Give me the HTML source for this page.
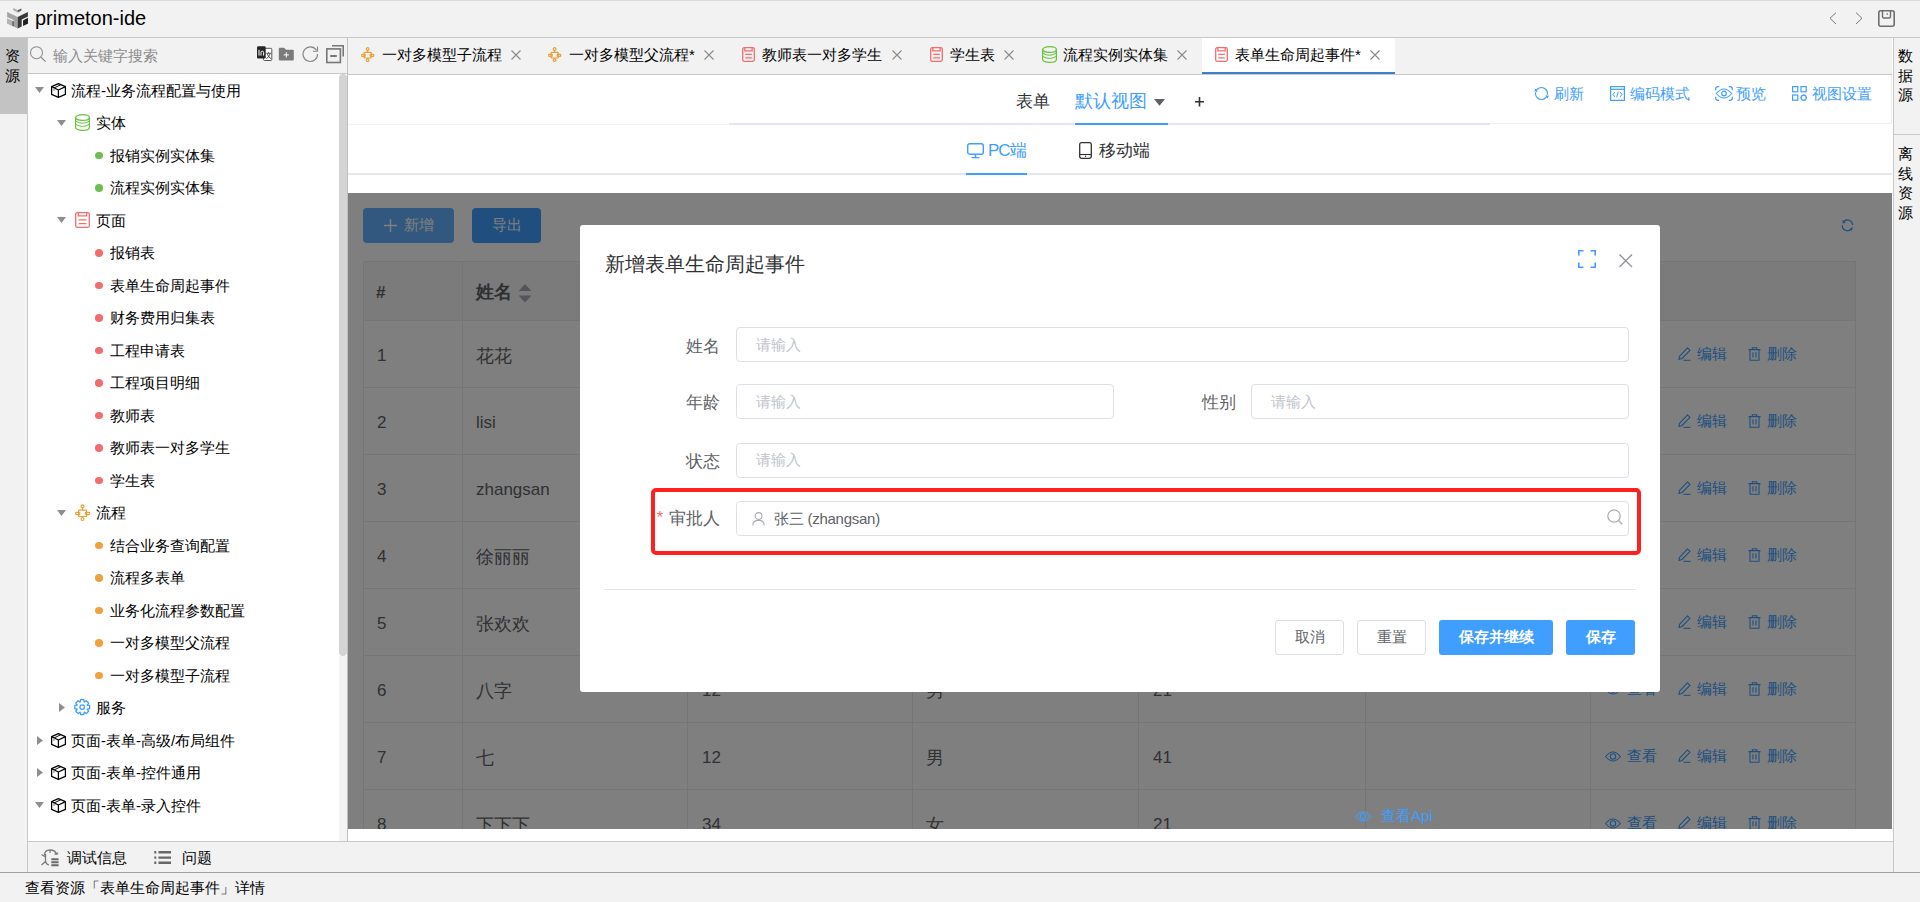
<!DOCTYPE html>
<html><head><meta charset="utf-8">
<style>
*{box-sizing:border-box;margin:0;padding:0}
html,body{width:1920px;height:902px;overflow:hidden;background:#f2f2f2;font-family:"Liberation Sans",sans-serif;color:#000}
.a{position:absolute}
.t{position:absolute;white-space:nowrap;font-size:15px;line-height:20px}
svg{position:absolute;overflow:visible}
</style></head><body>

<div class="a" style="left:0px;top:0px;width:1920px;height:1px;background:#dcdcdc;"></div>
<div class="a" style="left:0px;top:37px;width:1920px;height:1px;background:#c8c8c8;"></div>
<svg style="left:4px;top:4px;" width="28" height="28" viewBox="0 0 28 28"><path d="M3.1 8.1 L13.7 3 L23.9 8.1 L13.7 13 Z" fill="#efefef"/><path d="M3.1 8.1 L13.7 13 L13.7 24.5 L3.1 19.6 Z" fill="#a3a3a3"/><path d="M13.7 13 L23.9 8.1 L23.9 19.6 L13.7 24.5 Z" fill="#383838"/><path d="M3.1 13 L9.5 16.1 L9.5 17.6 L3.1 14.5 Z" fill="#f2f2f2"/><path d="M3.1 14.5 L8.5 17.1 L8.5 21.8 L3.1 19.2 Z" fill="#b3b3b3"/><path d="M8.5 17.1 L9.6 17.6 L9.6 22.3 L8.5 21.8 Z" fill="#4a4a4a"/><path d="M17.7 15.6 L23.9 12.6 L23.9 14.1 L19.2 16.4 L19.2 23 L17.7 23.7 Z" fill="#f2f2f2"/><path d="M19.2 16.4 L23.9 14.1 L23.9 19.5 L19.2 21.7 Z" fill="#1f1f1f"/><path d="M9.3 4 L13.7 6.2 L13.7 8.4 L9.3 6.2 Z" fill="#a8a8a8"/><path d="M13.7 6.2 L17.4 4.5 L17.4 6.6 L13.7 8.4 Z" fill="#585858"/></svg>
<div class="t" style="left:35px;top:4px;font-size:20px;line-height:28px;color:#000;">primeton-ide</div>
<svg style="left:1829px;top:12px;" width="8" height="13" viewBox="0 0 8 13"><path d="M7 0.6 L1 6.3 L7 12" fill="none" stroke="#6a6a6a" stroke-width="0.9"/></svg>
<svg style="left:1855px;top:12px;" width="8" height="13" viewBox="0 0 8 13"><path d="M1 0.6 L7 6.3 L1 12" fill="none" stroke="#6a6a6a" stroke-width="0.9"/></svg>
<svg style="left:1878px;top:10px;" width="17" height="17" viewBox="0 0 17 17"><rect x="0.8" y="0.8" width="15.4" height="15.4" rx="2" fill="none" stroke="#6e6e6e" stroke-width="1.6"/><path d="M4.5 0.8 V6.5 Q4.5 8 6 8 H11 Q12.5 8 12.5 6.5 V0.8" fill="none" stroke="#6e6e6e" stroke-width="1.4"/><path d="M9.2 3 V5" stroke="#6e6e6e" stroke-width="1"/></svg>
<div class="a" style="left:0px;top:38px;width:27px;height:76px;background:#c3c3c3;"></div>
<div class="a" style="left:27px;top:38px;width:1px;height:834px;background:#c8c8c8;"></div>
<div class="t" style="left:5px;top:46px;font-size:15px;line-height:20px;color:#000;">资</div>
<div class="t" style="left:5px;top:66px;font-size:15px;line-height:20px;color:#000;">源</div>
<div class="a" style="left:28px;top:38px;width:319px;height:35px;background:#f2f2f2;"></div>
<div class="a" style="left:28px;top:73px;width:319px;height:1px;background:#c8c8c8;"></div>
<div class="a" style="left:28px;top:74px;width:319px;height:767px;background:#fff;"></div>
<div class="a" style="left:339px;top:656px;width:8px;height:185px;background:#f4f4f4;"></div>
<div class="a" style="left:339px;top:74px;width:8px;height:582px;background:#d4d4d4;border-radius:4px"></div>
<div class="a" style="left:347px;top:38px;width:1px;height:803px;background:#c0c0c0;"></div>
<svg style="left:30px;top:46px;" width="17" height="17" viewBox="0 0 17 17"><circle cx="6.5" cy="6.7" r="6" fill="none" stroke="#8f8f8f" stroke-width="1.1"/><path d="M11 11.2 L15.6 15.6" stroke="#8f8f8f" stroke-width="1.2"/></svg>
<div class="t" style="left:53px;top:46px;font-size:15px;line-height:20px;color:#8c8c8c;">输入关键字搜索</div>
<svg style="left:257px;top:46px;" width="16" height="15" viewBox="0 0 16 15"><rect x="6.5" y="2.3" width="8.3" height="12.2" rx="1" fill="#fff" stroke="#555" stroke-width="1"/><path d="M9.3 7.3 H14 M11.6 6.2 V7.3 M10.2 7.6 Q11.5 11.6 14 12.6 M13.2 7.6 Q11.8 11.6 9.4 12.6" fill="none" stroke="#444" stroke-width="0.9"/><rect x="0" y="0.3" width="8.7" height="12.2" rx="1.3" fill="#262626"/><path d="M2 3.8 V9.6 M4 9.6 V6.4 Q4 5.1 5.3 5.1 Q6.6 5.1 6.6 6.4 V9.6" fill="none" stroke="#fff" stroke-width="1"/></svg>
<svg style="left:278px;top:47px;" width="17" height="14" viewBox="0 0 17 14"><path d="M0.8 1.5 Q0.8 0.7 1.6 0.7 H6.2 L8 2.8 H15 Q15.8 2.8 15.8 3.6 V12.6 Q15.8 13.4 15 13.4 H1.6 Q0.8 13.4 0.8 12.6 Z" fill="#7b7b7b"/><path d="M8.3 5.3 V10.5 M5.7 7.9 H10.9" stroke="#fff" stroke-width="1"/></svg>
<svg style="left:302px;top:45px;" width="17" height="17" viewBox="0 0 17 17"><path d="M14.5 5.3 A7.3 7.3 0 1 0 15.6 9" fill="none" stroke="#858585" stroke-width="1.1"/><path d="M15.5 1.6 V6.2 H11" fill="none" stroke="#858585" stroke-width="1.1"/></svg>
<svg style="left:325px;top:45px;" width="20" height="19" viewBox="0 0 20 19"><path d="M7 0.8 H18.2 V11.5" fill="none" stroke="#777" stroke-width="1.6"/><rect x="1.8" y="3.9" width="13.6" height="13.6" fill="none" stroke="#777" stroke-width="1.6"/><path d="M5.2 11 H11.8" stroke="#777" stroke-width="2"/></svg>
<svg style="left:35px;top:87.0px;" width="9" height="6" viewBox="0 0 9 6"><path d="M0 0 H9 L4.5 6 Z" fill="#8e8e8e"/></svg>
<svg style="left:51px;top:82.7px;" width="15" height="15" viewBox="0 0 15 15"><g fill="none" stroke="#000" stroke-width="1.25" stroke-linejoin="round"><path d="M7.4 0.6 L14.4 3.6 L14.4 11.4 L7.4 14.4 L0.6 11.4 L0.6 3.6 Z"/><path d="M0.6 3.6 L7.4 7 L14.4 3.6 M7.4 7 L7.4 14.4"/><path d="M3 5 L10 1.6" stroke-width="1"/></g><path d="M3 5.2 V8" stroke="#888" stroke-width="1.2"/></svg>
<div class="t" style="left:71px;top:80.5px;font-size:15px;line-height:20px;color:#000;">流程-业务流程配置与使用</div>
<svg style="left:57px;top:119.5px;" width="9" height="6" viewBox="0 0 9 6"><path d="M0 0 H9 L4.5 6 Z" fill="#8e8e8e"/></svg>
<svg style="left:75px;top:113.5px;" width="15" height="17" viewBox="0 0 15 17"><g fill="none" stroke="#67c23a" stroke-width="1.2"><ellipse cx="7.5" cy="3.5" rx="6.9" ry="2.9"/><path d="M0.6 3.5 V13.5 A6.9 2.9 0 0 0 14.4 13.5 V3.5"/><path d="M0.6 7 Q7.5 11.5 14.4 7" stroke-width="1"/><path d="M0.6 10.3 Q7.5 14.6 14.4 10.3" stroke-width="1"/></g></svg>
<div class="t" style="left:96px;top:113.0px;font-size:15px;line-height:20px;color:#000;">实体</div>
<div class="a" style="left:95px;top:151.8px;width:8px;height:7.5px;border-radius:50%;background:#6cbf4b"></div>
<div class="t" style="left:110px;top:145.5px;font-size:15px;line-height:20px;color:#000;">报销实例实体集</div>
<div class="a" style="left:95px;top:184.3px;width:8px;height:7.5px;border-radius:50%;background:#6cbf4b"></div>
<div class="t" style="left:110px;top:178.0px;font-size:15px;line-height:20px;color:#000;">流程实例实体集</div>
<svg style="left:57px;top:217.0px;" width="9" height="6" viewBox="0 0 9 6"><path d="M0 0 H9 L4.5 6 Z" fill="#8e8e8e"/></svg>
<svg style="left:75px;top:211.5px;" width="15" height="16" viewBox="0 0 15 16"><g fill="none" stroke="#f56c6c" stroke-width="1.3"><rect x="0.7" y="0.7" width="13.6" height="14.6" rx="1.5"/><path d="M3.3 0.7 V3.8 H11.700000000000001 V0.7"/><path d="M3.75 7.84 H11.4 M3.75 11.68 H11.4"/></g></svg>
<div class="t" style="left:96px;top:210.5px;font-size:15px;line-height:20px;color:#000;">页面</div>
<div class="a" style="left:95px;top:249.3px;width:8px;height:7.5px;border-radius:50%;background:#f26d6d"></div>
<div class="t" style="left:110px;top:243.0px;font-size:15px;line-height:20px;color:#000;">报销表</div>
<div class="a" style="left:95px;top:281.8px;width:8px;height:7.5px;border-radius:50%;background:#f26d6d"></div>
<div class="t" style="left:110px;top:275.5px;font-size:15px;line-height:20px;color:#000;">表单生命周起事件</div>
<div class="a" style="left:95px;top:314.3px;width:8px;height:7.5px;border-radius:50%;background:#f26d6d"></div>
<div class="t" style="left:110px;top:308.0px;font-size:15px;line-height:20px;color:#000;">财务费用归集表</div>
<div class="a" style="left:95px;top:346.8px;width:8px;height:7.5px;border-radius:50%;background:#f26d6d"></div>
<div class="t" style="left:110px;top:340.5px;font-size:15px;line-height:20px;color:#000;">工程申请表</div>
<div class="a" style="left:95px;top:379.3px;width:8px;height:7.5px;border-radius:50%;background:#f26d6d"></div>
<div class="t" style="left:110px;top:373.0px;font-size:15px;line-height:20px;color:#000;">工程项目明细</div>
<div class="a" style="left:95px;top:411.8px;width:8px;height:7.5px;border-radius:50%;background:#f26d6d"></div>
<div class="t" style="left:110px;top:405.5px;font-size:15px;line-height:20px;color:#000;">教师表</div>
<div class="a" style="left:95px;top:444.3px;width:8px;height:7.5px;border-radius:50%;background:#f26d6d"></div>
<div class="t" style="left:110px;top:438.0px;font-size:15px;line-height:20px;color:#000;">教师表一对多学生</div>
<div class="a" style="left:95px;top:476.8px;width:8px;height:7.5px;border-radius:50%;background:#f26d6d"></div>
<div class="t" style="left:110px;top:470.5px;font-size:15px;line-height:20px;color:#000;">学生表</div>
<svg style="left:57px;top:509.5px;" width="9" height="6" viewBox="0 0 9 6"><path d="M0 0 H9 L4.5 6 Z" fill="#8e8e8e"/></svg>
<svg style="left:74.5px;top:503.5px;" width="16" height="17" viewBox="0 0 16 17"><g transform="scale(1.0)" fill="none" stroke="#e6a23c" stroke-width="1.20"><circle cx="7.5" cy="2.3" r="1.5"/><circle cx="7.5" cy="15" r="1.5"/><path d="M7.5 3.8 V6.2 M7.5 12.5 V13.5"/><rect x="3.6" y="6.2" width="8" height="6.3" rx="0.6"/><rect x="0.8" y="8.3" width="4" height="2.3" rx="0.5"/><rect x="10.4" y="8.3" width="4" height="2.3" rx="0.5"/></g></svg>
<div class="t" style="left:96px;top:503.0px;font-size:15px;line-height:20px;color:#000;">流程</div>
<div class="a" style="left:95px;top:541.8px;width:8px;height:7.5px;border-radius:50%;background:#f0a03c"></div>
<div class="t" style="left:110px;top:535.5px;font-size:15px;line-height:20px;color:#000;">结合业务查询配置</div>
<div class="a" style="left:95px;top:574.3px;width:8px;height:7.5px;border-radius:50%;background:#f0a03c"></div>
<div class="t" style="left:110px;top:568.0px;font-size:15px;line-height:20px;color:#000;">流程多表单</div>
<div class="a" style="left:95px;top:606.8px;width:8px;height:7.5px;border-radius:50%;background:#f0a03c"></div>
<div class="t" style="left:110px;top:600.5px;font-size:15px;line-height:20px;color:#000;">业务化流程参数配置</div>
<div class="a" style="left:95px;top:639.3px;width:8px;height:7.5px;border-radius:50%;background:#f0a03c"></div>
<div class="t" style="left:110px;top:633.0px;font-size:15px;line-height:20px;color:#000;">一对多模型父流程</div>
<div class="a" style="left:95px;top:671.8px;width:8px;height:7.5px;border-radius:50%;background:#f0a03c"></div>
<div class="t" style="left:110px;top:665.5px;font-size:15px;line-height:20px;color:#000;">一对多模型子流程</div>
<svg style="left:59px;top:703.0px;" width="6" height="9" viewBox="0 0 6 9"><path d="M0 0 V9 L6 4.5 Z" fill="#8e8e8e"/></svg>
<svg style="left:74px;top:699.2px;" width="17" height="17" viewBox="0 0 17 17"><g fill="none" stroke="#409eff" stroke-width="1.3" stroke-linejoin="round"><path d="M6.54 0.68 L9.86 0.68 L10.25 3.11 L10.28 3.12 L12.27 1.68 L14.62 4.03 L13.18 6.02 L13.19 6.05 L15.62 6.44 L15.62 9.76 L13.19 10.15 L13.18 10.18 L14.62 12.17 L12.27 14.52 L10.28 13.08 L10.25 13.09 L9.86 15.52 L6.54 15.52 L6.15 13.09 L6.12 13.08 L4.13 14.52 L1.78 12.17 L3.22 10.18 L3.21 10.15 L0.78 9.76 L0.78 6.44 L3.21 6.05 L3.22 6.02 L1.78 4.03 L4.13 1.68 L6.12 3.12 L6.15 3.11 Z"/><circle cx="8.2" cy="8.1" r="2.3"/></g></svg>
<div class="t" style="left:96px;top:698.0px;font-size:15px;line-height:20px;color:#000;">服务</div>
<svg style="left:37px;top:735.5px;" width="6" height="9" viewBox="0 0 6 9"><path d="M0 0 V9 L6 4.5 Z" fill="#8e8e8e"/></svg>
<svg style="left:51px;top:732.7px;" width="15" height="15" viewBox="0 0 15 15"><g fill="none" stroke="#000" stroke-width="1.25" stroke-linejoin="round"><path d="M7.4 0.6 L14.4 3.6 L14.4 11.4 L7.4 14.4 L0.6 11.4 L0.6 3.6 Z"/><path d="M0.6 3.6 L7.4 7 L14.4 3.6 M7.4 7 L7.4 14.4"/><path d="M3 5 L10 1.6" stroke-width="1"/></g><path d="M3 5.2 V8" stroke="#888" stroke-width="1.2"/></svg>
<div class="t" style="left:71px;top:730.5px;font-size:15px;line-height:20px;color:#000;">页面-表单-高级/布局组件</div>
<svg style="left:37px;top:768.0px;" width="6" height="9" viewBox="0 0 6 9"><path d="M0 0 V9 L6 4.5 Z" fill="#8e8e8e"/></svg>
<svg style="left:51px;top:765.2px;" width="15" height="15" viewBox="0 0 15 15"><g fill="none" stroke="#000" stroke-width="1.25" stroke-linejoin="round"><path d="M7.4 0.6 L14.4 3.6 L14.4 11.4 L7.4 14.4 L0.6 11.4 L0.6 3.6 Z"/><path d="M0.6 3.6 L7.4 7 L14.4 3.6 M7.4 7 L7.4 14.4"/><path d="M3 5 L10 1.6" stroke-width="1"/></g><path d="M3 5.2 V8" stroke="#888" stroke-width="1.2"/></svg>
<div class="t" style="left:71px;top:763.0px;font-size:15px;line-height:20px;color:#000;">页面-表单-控件通用</div>
<svg style="left:35px;top:802.0px;" width="9" height="6" viewBox="0 0 9 6"><path d="M0 0 H9 L4.5 6 Z" fill="#8e8e8e"/></svg>
<svg style="left:51px;top:797.7px;" width="15" height="15" viewBox="0 0 15 15"><g fill="none" stroke="#000" stroke-width="1.25" stroke-linejoin="round"><path d="M7.4 0.6 L14.4 3.6 L14.4 11.4 L7.4 14.4 L0.6 11.4 L0.6 3.6 Z"/><path d="M0.6 3.6 L7.4 7 L14.4 3.6 M7.4 7 L7.4 14.4"/><path d="M3 5 L10 1.6" stroke-width="1"/></g><path d="M3 5.2 V8" stroke="#888" stroke-width="1.2"/></svg>
<div class="t" style="left:71px;top:795.5px;font-size:15px;line-height:20px;color:#000;">页面-表单-录入控件</div>
<div class="a" style="left:28px;top:841px;width:1865px;height:1px;background:#c8c8c8;"></div>
<div class="a" style="left:0px;top:872px;width:1920px;height:1px;background:#a0a0a0;"></div>
<div class="a" style="left:1893px;top:38px;width:1px;height:834px;background:#c8c8c8;"></div>
<div class="a" style="left:1894px;top:134px;width:26px;height:1px;background:#c8c8c8;"></div>
<div class="a" style="left:348px;top:38px;width:1545px;height:36px;background:#f2f2f2;"></div>
<div class="a" style="left:348px;top:74px;width:1545px;height:1px;background:#c8c8c8;"></div>
<div class="a" style="left:1202px;top:38px;width:193px;height:34px;background:#fff;"></div>
<div class="a" style="left:1202px;top:72px;width:193px;height:2px;background:#3d7fcf;"></div>
<svg style="left:360.5px;top:46.5px;" width="16" height="17" viewBox="0 0 16 17"><g transform="scale(0.88)" fill="none" stroke="#e6a23c" stroke-width="1.36"><circle cx="7.5" cy="2.3" r="1.5"/><circle cx="7.5" cy="15" r="1.5"/><path d="M7.5 3.8 V6.2 M7.5 12.5 V13.5"/><rect x="3.6" y="6.2" width="8" height="6.3" rx="0.6"/><rect x="0.8" y="8.3" width="4" height="2.3" rx="0.5"/><rect x="10.4" y="8.3" width="4" height="2.3" rx="0.5"/></g></svg>
<div class="t" style="left:382px;top:45px;font-size:15px;line-height:20px;color:#000;">一对多模型子流程</div>
<svg style="left:511px;top:49.5px;" width="10" height="10" viewBox="0 0 10 10"><path d="M0.5 0.5 L9.5 9.5 M9.5 0.5 L0.5 9.5" stroke="#8a8a8a" stroke-width="1.1" fill="none"/></svg>
<svg style="left:547.5px;top:46.5px;" width="16" height="17" viewBox="0 0 16 17"><g transform="scale(0.88)" fill="none" stroke="#e6a23c" stroke-width="1.36"><circle cx="7.5" cy="2.3" r="1.5"/><circle cx="7.5" cy="15" r="1.5"/><path d="M7.5 3.8 V6.2 M7.5 12.5 V13.5"/><rect x="3.6" y="6.2" width="8" height="6.3" rx="0.6"/><rect x="0.8" y="8.3" width="4" height="2.3" rx="0.5"/><rect x="10.4" y="8.3" width="4" height="2.3" rx="0.5"/></g></svg>
<div class="t" style="left:569px;top:45px;font-size:15px;line-height:20px;color:#000;">一对多模型父流程*</div>
<svg style="left:704px;top:49.5px;" width="10" height="10" viewBox="0 0 10 10"><path d="M0.5 0.5 L9.5 9.5 M9.5 0.5 L0.5 9.5" stroke="#8a8a8a" stroke-width="1.1" fill="none"/></svg>
<svg style="left:742px;top:47px;" width="13" height="15" viewBox="0 0 13 15"><g fill="none" stroke="#f56c6c" stroke-width="1.3"><rect x="0.7" y="0.7" width="11.6" height="13.6" rx="1.5"/><path d="M2.86 0.7 V3.8 H10.14 V0.7"/><path d="M3.25 7.35 H9.88 M3.25 10.95 H9.88"/></g></svg>
<div class="t" style="left:762px;top:45px;font-size:15px;line-height:20px;color:#000;">教师表一对多学生</div>
<svg style="left:892px;top:49.5px;" width="10" height="10" viewBox="0 0 10 10"><path d="M0.5 0.5 L9.5 9.5 M9.5 0.5 L0.5 9.5" stroke="#8a8a8a" stroke-width="1.1" fill="none"/></svg>
<svg style="left:930px;top:47px;" width="13" height="15" viewBox="0 0 13 15"><g fill="none" stroke="#f56c6c" stroke-width="1.3"><rect x="0.7" y="0.7" width="11.6" height="13.6" rx="1.5"/><path d="M2.86 0.7 V3.8 H10.14 V0.7"/><path d="M3.25 7.35 H9.88 M3.25 10.95 H9.88"/></g></svg>
<div class="t" style="left:950px;top:45px;font-size:15px;line-height:20px;color:#000;">学生表</div>
<svg style="left:1004px;top:49.5px;" width="10" height="10" viewBox="0 0 10 10"><path d="M0.5 0.5 L9.5 9.5 M9.5 0.5 L0.5 9.5" stroke="#8a8a8a" stroke-width="1.1" fill="none"/></svg>
<svg style="left:1042px;top:46px;" width="15" height="17" viewBox="0 0 15 17"><g fill="none" stroke="#67c23a" stroke-width="1.2"><ellipse cx="7.5" cy="3.5" rx="6.9" ry="2.9"/><path d="M0.6 3.5 V13.5 A6.9 2.9 0 0 0 14.4 13.5 V3.5"/><path d="M0.6 7 Q7.5 11.5 14.4 7" stroke-width="1"/><path d="M0.6 10.3 Q7.5 14.6 14.4 10.3" stroke-width="1"/></g></svg>
<div class="t" style="left:1063px;top:45px;font-size:15px;line-height:20px;color:#000;">流程实例实体集</div>
<svg style="left:1177px;top:49.5px;" width="10" height="10" viewBox="0 0 10 10"><path d="M0.5 0.5 L9.5 9.5 M9.5 0.5 L0.5 9.5" stroke="#8a8a8a" stroke-width="1.1" fill="none"/></svg>
<svg style="left:1215px;top:47px;" width="13" height="15" viewBox="0 0 13 15"><g fill="none" stroke="#f56c6c" stroke-width="1.3"><rect x="0.7" y="0.7" width="11.6" height="13.6" rx="1.5"/><path d="M2.86 0.7 V3.8 H10.14 V0.7"/><path d="M3.25 7.35 H9.88 M3.25 10.95 H9.88"/></g></svg>
<div class="t" style="left:1235px;top:45px;font-size:15px;line-height:20px;color:#000;">表单生命周起事件*</div>
<svg style="left:1370px;top:49.5px;" width="10" height="10" viewBox="0 0 10 10"><path d="M0.5 0.5 L9.5 9.5 M9.5 0.5 L0.5 9.5" stroke="#8a8a8a" stroke-width="1.1" fill="none"/></svg>
<div class="a" style="left:348px;top:75px;width:1544px;height:118px;background:#fff;"></div>
<div class="a" style="left:729px;top:123px;width:761px;height:2px;background:#e4e7ed;"></div>
<div class="a" style="left:1490px;top:123px;width:402px;height:1px;background:#f3eef0;"></div>
<div class="a" style="left:1891px;top:75px;width:1px;height:49px;background:#f1eced;"></div>
<div class="a" style="left:348px;top:124px;width:381px;height:1px;background:#f3f3f3;"></div>
<div class="t" style="left:1016px;top:89.5px;font-size:17px;line-height:24px;color:#303133;">表单</div>
<div class="t" style="left:1075px;top:89px;font-size:17.5px;line-height:24px;color:#409eff;">默认视图</div>
<svg style="left:1154px;top:99px;" width="11" height="7" viewBox="0 0 11 7"><path d="M0 0 H11 L5.5 6.8 Z" fill="#5f6167"/></svg>
<svg style="left:1194.5px;top:97px;" width="9" height="9.5" viewBox="0 0 9 9.5"><path d="M4.5 0 V9.5 M0 4.75 H9" stroke="#303133" stroke-width="1.6"/></svg>
<div class="a" style="left:1075px;top:123px;width:93px;height:2px;background:#409eff;"></div>
<svg style="left:1534px;top:86px;" width="15" height="15" viewBox="0 0 15 15"><circle cx="7.5" cy="7.5" r="6" fill="none" stroke="#409eff" stroke-width="1.1"/><path d="M0 5.6 L3.6 5.6 L1.6 2.6 Z M15 9.4 L11.4 9.4 L13.4 12.4 Z" fill="#409eff"/><path d="M0.8 5.2 L2.6 6.6 M14.2 9.8 L12.4 8.4" stroke="#fff" stroke-width="0.8"/></svg>
<div class="t" style="left:1554px;top:84px;font-size:15px;line-height:20px;color:#409eff;">刷新</div>
<svg style="left:1610px;top:86px;" width="15" height="15" viewBox="0 0 15 15"><rect x="0.6" y="0.6" width="13.8" height="13.8" fill="none" stroke="#409eff" stroke-width="1.2"/><path d="M0.6 3.3 H14.4" stroke="#409eff" stroke-width="1.2"/><path d="M5 6 L3 8.5 L5 11 M10 6 L12 8.5 L10 11 M8.3 5.6 L6.7 11.4" fill="none" stroke="#409eff" stroke-width="1"/></svg>
<div class="t" style="left:1629.5px;top:84px;font-size:15px;line-height:20px;color:#409eff;">编码模式</div>
<svg style="left:1714.5px;top:86px;" width="18" height="15" viewBox="0 0 18 15"><path d="M0.7 4.2 V3 Q0.7 0.7 3 0.7 H4.2 M13.8 0.7 H15 Q17.3 0.7 17.3 3 V4.2 M17.3 10.8 V12 Q17.3 14.3 15 14.3 H13.8 M4.2 14.3 H3 Q0.7 14.3 0.7 12 V10.8" fill="none" stroke="#409eff" stroke-width="1.2"/><path d="M1.3 7.5 Q9 -1.6 16.7 7.5 Q9 16.6 1.3 7.5 Z" fill="none" stroke="#409eff" stroke-width="1.1"/><circle cx="9" cy="7.5" r="2.3" fill="none" stroke="#409eff" stroke-width="1.2"/></svg>
<div class="t" style="left:1736px;top:84px;font-size:15px;line-height:20px;color:#409eff;">预览</div>
<svg style="left:1792px;top:86px;" width="16" height="15" viewBox="0 0 16 15"><g fill="none" stroke="#409eff" stroke-width="1.2"><rect x="0.6" y="0.6" width="5.2" height="5.2"/><rect x="9" y="0.6" width="5.2" height="5.2"/><rect x="0.6" y="9" width="5.2" height="5.2"/><circle cx="11.7" cy="11.7" r="2.5"/><path d="M11.7 8.4 V9.2 M11.7 14.2 V15 M8.4 11.7 H9.2 M14.2 11.7 H15" /></g></svg>
<div class="t" style="left:1812px;top:84px;font-size:15px;line-height:20px;color:#409eff;">视图设置</div>
<div class="a" style="left:348px;top:173px;width:1544px;height:2px;background:#e4e7ed;"></div>
<div class="a" style="left:966px;top:173px;width:61px;height:2px;background:#409eff;"></div>
<svg style="left:966.5px;top:143px;" width="17" height="16" viewBox="0 0 17 16"><rect x="0.7" y="0.7" width="15.6" height="10.5" rx="2" fill="none" stroke="#409eff" stroke-width="1.4"/><path d="M8.5 11.2 V14.6 M4.5 14.6 H12.5" stroke="#409eff" stroke-width="1.4"/></svg>
<div class="t" style="left:988px;top:139px;font-size:17px;line-height:24px;color:#409eff;"><span style="font-size:17px;letter-spacing:-1px">PC</span>端</div>
<svg style="left:1079px;top:142px;" width="13" height="17" viewBox="0 0 13 17"><rect x="0.7" y="0.7" width="11.6" height="15.6" rx="1.8" fill="none" stroke="#303133" stroke-width="1.3"/><path d="M0.7 12.5 H12.3" stroke="#303133" stroke-width="1.1"/><circle cx="6.5" cy="14.3" r="0.7" fill="#303133"/></svg>
<div class="t" style="left:1099px;top:139px;font-size:17px;line-height:24px;color:#303133;">移动端</div>
<div class="a" style="left:348px;top:193px;width:1544px;height:636px;background:#fff;"></div>
<div class="a" style="left:363px;top:208px;width:91px;height:35px;background:#66b1ff;border-radius:4px"></div>
<svg style="left:384px;top:218.5px;" width="13" height="13" viewBox="0 0 13 13"><path d="M6.5 0 V13 M0 6.5 H13" stroke="#fff" stroke-width="1.4"/></svg>
<div class="t" style="left:404px;top:215px;font-size:15px;line-height:20px;color:#fff;">新增</div>
<div class="a" style="left:472px;top:208px;width:69px;height:35px;background:#409eff;border-radius:4px"></div>
<div class="t" style="left:491.5px;top:215px;font-size:15px;line-height:20px;color:#fff;">导出</div>
<svg style="left:1841px;top:219px;" width="13" height="13" viewBox="0 0 13 13"><path d="M3 2.3 A5.3 5.3 0 0 1 11.7 6" fill="none" stroke="#409eff" stroke-width="1.3"/><path d="M1.3 6.2 A5.3 5.3 0 0 0 10.2 10.3" fill="none" stroke="#409eff" stroke-width="1.3"/><path d="M1.4 1 L1.7 4.6 L5 3.4 Z M11.7 8.1 L11.3 11.7 L8.2 10.4 Z" fill="#409eff"/></svg>
<div class="a" style="left:363px;top:261px;width:1492px;height:59px;background:#f6f7f9;"></div>
<div class="a" style="left:363px;top:261px;width:1492px;height:1px;background:#e9ebef;"></div>
<div class="a" style="left:363px;top:320px;width:1492px;height:1px;background:#e9ebef;"></div>
<div class="a" style="left:363px;top:387px;width:1492px;height:1px;background:#e9ebef;"></div>
<div class="a" style="left:363px;top:454px;width:1492px;height:1px;background:#e9ebef;"></div>
<div class="a" style="left:363px;top:521px;width:1492px;height:1px;background:#e9ebef;"></div>
<div class="a" style="left:363px;top:588px;width:1492px;height:1px;background:#e9ebef;"></div>
<div class="a" style="left:363px;top:655px;width:1492px;height:1px;background:#e9ebef;"></div>
<div class="a" style="left:363px;top:722px;width:1492px;height:1px;background:#e9ebef;"></div>
<div class="a" style="left:363px;top:789px;width:1492px;height:1px;background:#e9ebef;"></div>
<div class="a" style="left:363px;top:261px;width:1px;height:568px;background:#e9ebef;"></div>
<div class="a" style="left:462px;top:261px;width:1px;height:568px;background:#e9ebef;"></div>
<div class="a" style="left:687px;top:261px;width:1px;height:568px;background:#e9ebef;"></div>
<div class="a" style="left:912px;top:261px;width:1px;height:568px;background:#e9ebef;"></div>
<div class="a" style="left:1138px;top:261px;width:1px;height:568px;background:#e9ebef;"></div>
<div class="a" style="left:1365px;top:261px;width:1px;height:568px;background:#e9ebef;"></div>
<div class="a" style="left:1590px;top:261px;width:1px;height:568px;background:#e9ebef;"></div>
<div class="a" style="left:1855px;top:261px;width:1px;height:568px;background:#e9ebef;"></div>
<div class="t" style="left:376px;top:282.5px;font-size:17px;line-height:20px;color:#5c5e62;font-weight:bold">#</div>
<div class="t" style="left:476px;top:280.5px;font-size:18px;line-height:22px;color:#5c5e62;font-weight:bold">姓名</div>
<svg style="left:518px;top:283.5px;" width="14" height="20" viewBox="0 0 14 20"><path d="M7 0 L13.5 7 H0.5 Z M0.5 11.5 H13.5 L7 18.5 Z" fill="#a8abb2"/></svg>
<div class="t" style="left:377px;top:344.5px;font-size:17px;line-height:22px;color:#606266;">1</div>
<div class="t" style="left:476px;top:344.5px;font-size:18px;line-height:22px;color:#606266;">花花</div>
<svg style="left:1605px;top:349.2px;" width="16" height="11" viewBox="0 0 16 11"><path d="M0.6 5.5 Q8 -3.6 15.4 5.5 Q8 14.6 0.6 5.5 Z" fill="none" stroke="#409eff" stroke-width="1.1"/><circle cx="8" cy="5.5" r="2.7" fill="none" stroke="#409eff" stroke-width="1.1"/></svg>
<div class="t" style="left:1627px;top:344.3px;font-size:15px;line-height:20px;color:#409eff;">查看</div>
<svg style="left:1677.5px;top:347.2px;" width="13" height="14" viewBox="0 0 13 14"><path d="M9.5 0.8 L12 3.3 L4 11.5 L1 12.5 L1.5 9.3 Z" fill="none" stroke="#409eff" stroke-width="1.1" stroke-linejoin="round"/><path d="M5.5 13.3 H12.5" stroke="#409eff" stroke-width="1.1"/></svg>
<div class="t" style="left:1697px;top:344.3px;font-size:15px;line-height:20px;color:#409eff;">编辑</div>
<svg style="left:1748px;top:347.2px;" width="13" height="14" viewBox="0 0 13 14"><path d="M0.5 2.6 H12.5 M4.3 2.6 V0.7 H8.7 V2.6" fill="none" stroke="#409eff" stroke-width="1.1"/><path d="M2 2.6 V13.2 H11 V2.6" fill="none" stroke="#409eff" stroke-width="1.1"/><path d="M5 5.3 V10.5 M8 5.3 V10.5" stroke="#409eff" stroke-width="1.1"/></svg>
<div class="t" style="left:1767px;top:344.3px;font-size:15px;line-height:20px;color:#409eff;">删除</div>
<div class="t" style="left:377px;top:411.5px;font-size:17px;line-height:22px;color:#606266;">2</div>
<div class="t" style="left:476px;top:411.5px;font-size:17px;line-height:22px;color:#606266;">lisi</div>
<svg style="left:1605px;top:416.2px;" width="16" height="11" viewBox="0 0 16 11"><path d="M0.6 5.5 Q8 -3.6 15.4 5.5 Q8 14.6 0.6 5.5 Z" fill="none" stroke="#409eff" stroke-width="1.1"/><circle cx="8" cy="5.5" r="2.7" fill="none" stroke="#409eff" stroke-width="1.1"/></svg>
<div class="t" style="left:1627px;top:411.3px;font-size:15px;line-height:20px;color:#409eff;">查看</div>
<svg style="left:1677.5px;top:414.2px;" width="13" height="14" viewBox="0 0 13 14"><path d="M9.5 0.8 L12 3.3 L4 11.5 L1 12.5 L1.5 9.3 Z" fill="none" stroke="#409eff" stroke-width="1.1" stroke-linejoin="round"/><path d="M5.5 13.3 H12.5" stroke="#409eff" stroke-width="1.1"/></svg>
<div class="t" style="left:1697px;top:411.3px;font-size:15px;line-height:20px;color:#409eff;">编辑</div>
<svg style="left:1748px;top:414.2px;" width="13" height="14" viewBox="0 0 13 14"><path d="M0.5 2.6 H12.5 M4.3 2.6 V0.7 H8.7 V2.6" fill="none" stroke="#409eff" stroke-width="1.1"/><path d="M2 2.6 V13.2 H11 V2.6" fill="none" stroke="#409eff" stroke-width="1.1"/><path d="M5 5.3 V10.5 M8 5.3 V10.5" stroke="#409eff" stroke-width="1.1"/></svg>
<div class="t" style="left:1767px;top:411.3px;font-size:15px;line-height:20px;color:#409eff;">删除</div>
<div class="t" style="left:377px;top:478.5px;font-size:17px;line-height:22px;color:#606266;">3</div>
<div class="t" style="left:476px;top:478.5px;font-size:17px;line-height:22px;color:#606266;">zhangsan</div>
<svg style="left:1605px;top:483.2px;" width="16" height="11" viewBox="0 0 16 11"><path d="M0.6 5.5 Q8 -3.6 15.4 5.5 Q8 14.6 0.6 5.5 Z" fill="none" stroke="#409eff" stroke-width="1.1"/><circle cx="8" cy="5.5" r="2.7" fill="none" stroke="#409eff" stroke-width="1.1"/></svg>
<div class="t" style="left:1627px;top:478.3px;font-size:15px;line-height:20px;color:#409eff;">查看</div>
<svg style="left:1677.5px;top:481.2px;" width="13" height="14" viewBox="0 0 13 14"><path d="M9.5 0.8 L12 3.3 L4 11.5 L1 12.5 L1.5 9.3 Z" fill="none" stroke="#409eff" stroke-width="1.1" stroke-linejoin="round"/><path d="M5.5 13.3 H12.5" stroke="#409eff" stroke-width="1.1"/></svg>
<div class="t" style="left:1697px;top:478.3px;font-size:15px;line-height:20px;color:#409eff;">编辑</div>
<svg style="left:1748px;top:481.2px;" width="13" height="14" viewBox="0 0 13 14"><path d="M0.5 2.6 H12.5 M4.3 2.6 V0.7 H8.7 V2.6" fill="none" stroke="#409eff" stroke-width="1.1"/><path d="M2 2.6 V13.2 H11 V2.6" fill="none" stroke="#409eff" stroke-width="1.1"/><path d="M5 5.3 V10.5 M8 5.3 V10.5" stroke="#409eff" stroke-width="1.1"/></svg>
<div class="t" style="left:1767px;top:478.3px;font-size:15px;line-height:20px;color:#409eff;">删除</div>
<div class="t" style="left:377px;top:545.5px;font-size:17px;line-height:22px;color:#606266;">4</div>
<div class="t" style="left:476px;top:545.5px;font-size:18px;line-height:22px;color:#606266;">徐丽丽</div>
<svg style="left:1605px;top:550.2px;" width="16" height="11" viewBox="0 0 16 11"><path d="M0.6 5.5 Q8 -3.6 15.4 5.5 Q8 14.6 0.6 5.5 Z" fill="none" stroke="#409eff" stroke-width="1.1"/><circle cx="8" cy="5.5" r="2.7" fill="none" stroke="#409eff" stroke-width="1.1"/></svg>
<div class="t" style="left:1627px;top:545.3px;font-size:15px;line-height:20px;color:#409eff;">查看</div>
<svg style="left:1677.5px;top:548.2px;" width="13" height="14" viewBox="0 0 13 14"><path d="M9.5 0.8 L12 3.3 L4 11.5 L1 12.5 L1.5 9.3 Z" fill="none" stroke="#409eff" stroke-width="1.1" stroke-linejoin="round"/><path d="M5.5 13.3 H12.5" stroke="#409eff" stroke-width="1.1"/></svg>
<div class="t" style="left:1697px;top:545.3px;font-size:15px;line-height:20px;color:#409eff;">编辑</div>
<svg style="left:1748px;top:548.2px;" width="13" height="14" viewBox="0 0 13 14"><path d="M0.5 2.6 H12.5 M4.3 2.6 V0.7 H8.7 V2.6" fill="none" stroke="#409eff" stroke-width="1.1"/><path d="M2 2.6 V13.2 H11 V2.6" fill="none" stroke="#409eff" stroke-width="1.1"/><path d="M5 5.3 V10.5 M8 5.3 V10.5" stroke="#409eff" stroke-width="1.1"/></svg>
<div class="t" style="left:1767px;top:545.3px;font-size:15px;line-height:20px;color:#409eff;">删除</div>
<div class="t" style="left:377px;top:612.5px;font-size:17px;line-height:22px;color:#606266;">5</div>
<div class="t" style="left:476px;top:612.5px;font-size:18px;line-height:22px;color:#606266;">张欢欢</div>
<svg style="left:1605px;top:617.2px;" width="16" height="11" viewBox="0 0 16 11"><path d="M0.6 5.5 Q8 -3.6 15.4 5.5 Q8 14.6 0.6 5.5 Z" fill="none" stroke="#409eff" stroke-width="1.1"/><circle cx="8" cy="5.5" r="2.7" fill="none" stroke="#409eff" stroke-width="1.1"/></svg>
<div class="t" style="left:1627px;top:612.3px;font-size:15px;line-height:20px;color:#409eff;">查看</div>
<svg style="left:1677.5px;top:615.2px;" width="13" height="14" viewBox="0 0 13 14"><path d="M9.5 0.8 L12 3.3 L4 11.5 L1 12.5 L1.5 9.3 Z" fill="none" stroke="#409eff" stroke-width="1.1" stroke-linejoin="round"/><path d="M5.5 13.3 H12.5" stroke="#409eff" stroke-width="1.1"/></svg>
<div class="t" style="left:1697px;top:612.3px;font-size:15px;line-height:20px;color:#409eff;">编辑</div>
<svg style="left:1748px;top:615.2px;" width="13" height="14" viewBox="0 0 13 14"><path d="M0.5 2.6 H12.5 M4.3 2.6 V0.7 H8.7 V2.6" fill="none" stroke="#409eff" stroke-width="1.1"/><path d="M2 2.6 V13.2 H11 V2.6" fill="none" stroke="#409eff" stroke-width="1.1"/><path d="M5 5.3 V10.5 M8 5.3 V10.5" stroke="#409eff" stroke-width="1.1"/></svg>
<div class="t" style="left:1767px;top:612.3px;font-size:15px;line-height:20px;color:#409eff;">删除</div>
<div class="t" style="left:377px;top:679.5px;font-size:17px;line-height:22px;color:#606266;">6</div>
<div class="t" style="left:476px;top:679.5px;font-size:18px;line-height:22px;color:#606266;">八字</div>
<div class="t" style="left:702px;top:679.5px;font-size:17px;line-height:22px;color:#606266;">12</div>
<div class="t" style="left:925.5px;top:679.5px;font-size:18px;line-height:22px;color:#606266;">男</div>
<div class="t" style="left:1153px;top:679.5px;font-size:17px;line-height:22px;color:#606266;">21</div>
<svg style="left:1605px;top:684.2px;" width="16" height="11" viewBox="0 0 16 11"><path d="M0.6 5.5 Q8 -3.6 15.4 5.5 Q8 14.6 0.6 5.5 Z" fill="none" stroke="#409eff" stroke-width="1.1"/><circle cx="8" cy="5.5" r="2.7" fill="none" stroke="#409eff" stroke-width="1.1"/></svg>
<div class="t" style="left:1627px;top:679.3px;font-size:15px;line-height:20px;color:#409eff;">查看</div>
<svg style="left:1677.5px;top:682.2px;" width="13" height="14" viewBox="0 0 13 14"><path d="M9.5 0.8 L12 3.3 L4 11.5 L1 12.5 L1.5 9.3 Z" fill="none" stroke="#409eff" stroke-width="1.1" stroke-linejoin="round"/><path d="M5.5 13.3 H12.5" stroke="#409eff" stroke-width="1.1"/></svg>
<div class="t" style="left:1697px;top:679.3px;font-size:15px;line-height:20px;color:#409eff;">编辑</div>
<svg style="left:1748px;top:682.2px;" width="13" height="14" viewBox="0 0 13 14"><path d="M0.5 2.6 H12.5 M4.3 2.6 V0.7 H8.7 V2.6" fill="none" stroke="#409eff" stroke-width="1.1"/><path d="M2 2.6 V13.2 H11 V2.6" fill="none" stroke="#409eff" stroke-width="1.1"/><path d="M5 5.3 V10.5 M8 5.3 V10.5" stroke="#409eff" stroke-width="1.1"/></svg>
<div class="t" style="left:1767px;top:679.3px;font-size:15px;line-height:20px;color:#409eff;">删除</div>
<div class="t" style="left:377px;top:746.5px;font-size:17px;line-height:22px;color:#606266;">7</div>
<div class="t" style="left:476px;top:746.5px;font-size:18px;line-height:22px;color:#606266;">七</div>
<div class="t" style="left:702px;top:746.5px;font-size:17px;line-height:22px;color:#606266;">12</div>
<div class="t" style="left:925.5px;top:746.5px;font-size:18px;line-height:22px;color:#606266;">男</div>
<div class="t" style="left:1153px;top:746.5px;font-size:17px;line-height:22px;color:#606266;">41</div>
<svg style="left:1605px;top:751.2px;" width="16" height="11" viewBox="0 0 16 11"><path d="M0.6 5.5 Q8 -3.6 15.4 5.5 Q8 14.6 0.6 5.5 Z" fill="none" stroke="#409eff" stroke-width="1.1"/><circle cx="8" cy="5.5" r="2.7" fill="none" stroke="#409eff" stroke-width="1.1"/></svg>
<div class="t" style="left:1627px;top:746.3px;font-size:15px;line-height:20px;color:#409eff;">查看</div>
<svg style="left:1677.5px;top:749.2px;" width="13" height="14" viewBox="0 0 13 14"><path d="M9.5 0.8 L12 3.3 L4 11.5 L1 12.5 L1.5 9.3 Z" fill="none" stroke="#409eff" stroke-width="1.1" stroke-linejoin="round"/><path d="M5.5 13.3 H12.5" stroke="#409eff" stroke-width="1.1"/></svg>
<div class="t" style="left:1697px;top:746.3px;font-size:15px;line-height:20px;color:#409eff;">编辑</div>
<svg style="left:1748px;top:749.2px;" width="13" height="14" viewBox="0 0 13 14"><path d="M0.5 2.6 H12.5 M4.3 2.6 V0.7 H8.7 V2.6" fill="none" stroke="#409eff" stroke-width="1.1"/><path d="M2 2.6 V13.2 H11 V2.6" fill="none" stroke="#409eff" stroke-width="1.1"/><path d="M5 5.3 V10.5 M8 5.3 V10.5" stroke="#409eff" stroke-width="1.1"/></svg>
<div class="t" style="left:1767px;top:746.3px;font-size:15px;line-height:20px;color:#409eff;">删除</div>
<div class="t" style="left:377px;top:813.5px;font-size:17px;line-height:22px;color:#606266;">8</div>
<div class="t" style="left:476px;top:813.5px;font-size:18px;line-height:22px;color:#606266;">下下下</div>
<div class="t" style="left:702px;top:813.5px;font-size:17px;line-height:22px;color:#606266;">34</div>
<div class="t" style="left:925.5px;top:813.5px;font-size:18px;line-height:22px;color:#606266;">女</div>
<div class="t" style="left:1153px;top:813.5px;font-size:17px;line-height:22px;color:#606266;">21</div>
<svg style="left:1605px;top:818.2px;" width="16" height="11" viewBox="0 0 16 11"><path d="M0.6 5.5 Q8 -3.6 15.4 5.5 Q8 14.6 0.6 5.5 Z" fill="none" stroke="#409eff" stroke-width="1.1"/><circle cx="8" cy="5.5" r="2.7" fill="none" stroke="#409eff" stroke-width="1.1"/></svg>
<div class="t" style="left:1627px;top:813.3px;font-size:15px;line-height:20px;color:#409eff;">查看</div>
<svg style="left:1677.5px;top:816.2px;" width="13" height="14" viewBox="0 0 13 14"><path d="M9.5 0.8 L12 3.3 L4 11.5 L1 12.5 L1.5 9.3 Z" fill="none" stroke="#409eff" stroke-width="1.1" stroke-linejoin="round"/><path d="M5.5 13.3 H12.5" stroke="#409eff" stroke-width="1.1"/></svg>
<div class="t" style="left:1697px;top:813.3px;font-size:15px;line-height:20px;color:#409eff;">编辑</div>
<svg style="left:1748px;top:816.2px;" width="13" height="14" viewBox="0 0 13 14"><path d="M0.5 2.6 H12.5 M4.3 2.6 V0.7 H8.7 V2.6" fill="none" stroke="#409eff" stroke-width="1.1"/><path d="M2 2.6 V13.2 H11 V2.6" fill="none" stroke="#409eff" stroke-width="1.1"/><path d="M5 5.3 V10.5 M8 5.3 V10.5" stroke="#409eff" stroke-width="1.1"/></svg>
<div class="t" style="left:1767px;top:813.3px;font-size:15px;line-height:20px;color:#409eff;">删除</div>
<div class="a" style="left:348px;top:829px;width:1545px;height:12px;background:#fff;"></div>
<div class="a" style="left:348px;top:193px;width:1544px;height:636px;background:rgba(0,0,0,0.5);"></div>
<div class="a" style="left:1892px;top:38px;width:1px;height:803px;background:#fff;"></div>
<svg style="left:1355px;top:810.5px;" width="16" height="11" viewBox="0 0 16 11"><path d="M0.6 5.5 Q8 -3.6 15.4 5.5 Q8 14.6 0.6 5.5 Z" fill="none" stroke="#409eff" stroke-width="1.1"/><circle cx="8" cy="5.5" r="2.7" fill="none" stroke="#409eff" stroke-width="1.1"/></svg>
<div class="t" style="left:1381px;top:805.8px;font-size:15px;line-height:20px;color:#409eff;">查看Api</div>
<div class="a" style="left:580px;top:225px;width:1080px;height:467px;background:#fff;border-radius:3px"></div>
<div class="t" style="left:604.5px;top:251px;font-size:20px;line-height:26px;color:#303133;">新增表单生命周起事件</div>
<svg style="left:1578px;top:250px;" width="18" height="18" viewBox="0 0 18 18"><path d="M0.8 5.5 V0.8 H5.5 M12.5 0.8 H17.2 V5.5 M17.2 12.5 V17.2 H12.5 M5.5 17.2 H0.8 V12.5" fill="none" stroke="#409eff" stroke-width="1.6"/></svg>
<svg style="left:1619px;top:253.5px;" width="13.5" height="13.5" viewBox="0 0 13.5 13.5"><path d="M0.5 0.5 L13.0 13.0 M13.0 0.5 L0.5 13.0" stroke="#909399" stroke-width="1.3" fill="none"/></svg>
<div class="t" style="left:686px;top:335.5px;font-size:17px;line-height:22px;color:#606266;">姓名</div>
<div class="a" style="left:736px;top:327px;width:893px;height:35px;background:#fff;border:1px solid #dcdfe6;border-radius:4px"></div>
<div class="t" style="left:756px;top:334.5px;font-size:14.5px;line-height:20px;color:#c0c4cc;">请输入</div>
<div class="t" style="left:686px;top:392.3px;font-size:17px;line-height:22px;color:#606266;">年龄</div>
<div class="a" style="left:736px;top:384px;width:378px;height:35px;background:#fff;border:1px solid #dcdfe6;border-radius:4px"></div>
<div class="t" style="left:756px;top:391.5px;font-size:14.5px;line-height:20px;color:#c0c4cc;">请输入</div>
<div class="t" style="left:1202px;top:392.3px;font-size:17px;line-height:22px;color:#606266;">性别</div>
<div class="a" style="left:1251px;top:384px;width:378px;height:35px;background:#fff;border:1px solid #dcdfe6;border-radius:4px"></div>
<div class="t" style="left:1271px;top:391.5px;font-size:14.5px;line-height:20px;color:#c0c4cc;">请输入</div>
<div class="t" style="left:686px;top:450.5px;font-size:17px;line-height:22px;color:#606266;">状态</div>
<div class="a" style="left:736px;top:442.5px;width:893px;height:35px;background:#fff;border:1px solid #dcdfe6;border-radius:4px"></div>
<div class="t" style="left:756px;top:450px;font-size:14.5px;line-height:20px;color:#c0c4cc;">请输入</div>
<div class="a" style="left:736px;top:501px;width:893px;height:35px;background:#fff;border:1px solid #dcdfe6;border-radius:4px"></div>
<div class="t" style="left:656.5px;top:507.8px;font-size:17px;line-height:20px;color:#f56c6c;">*</div>
<div class="t" style="left:669px;top:507.5px;font-size:17px;line-height:22px;color:#606266;">审批人</div>
<svg style="left:752px;top:512px;" width="13" height="14" viewBox="0 0 13 14"><circle cx="6.5" cy="4" r="3.4" fill="none" stroke="#a8abb2" stroke-width="1.1"/><path d="M0.8 13.5 Q0.8 8.4 6.5 8.4 Q12.2 8.4 12.2 13.5" fill="none" stroke="#a8abb2" stroke-width="1.1"/></svg>
<div class="t" style="left:774px;top:508.5px;font-size:15px;line-height:20px;color:#606266;letter-spacing:-0.25px">张三 (zhangsan)</div>
<svg style="left:1607px;top:508.5px;" width="17" height="17" viewBox="0 0 17 17"><circle cx="7" cy="7" r="6.2" fill="none" stroke="#a8abb2" stroke-width="1.2"/><path d="M11.5 11.5 L15.3 15.3" stroke="#a8abb2" stroke-width="1.3"/></svg>
<div class="a" style="left:651px;top:488.3px;width:990px;height:67px;background:transparent;border:4.6px solid #ff1f1f;border-radius:5px"></div>
<div class="a" style="left:604px;top:589px;width:1032px;height:1px;background:#e4e7ed;"></div>
<div class="a" style="left:1275px;top:620px;width:69px;height:35px;background:#fff;border:1px solid #dcdfe6;border-radius:3px"></div>
<div class="t" style="left:1295px;top:627px;font-size:15px;line-height:20px;color:#606266;">取消</div>
<div class="a" style="left:1357px;top:620px;width:69px;height:35px;background:#fff;border:1px solid #dcdfe6;border-radius:3px"></div>
<div class="t" style="left:1377px;top:627px;font-size:15px;line-height:20px;color:#606266;">重置</div>
<div class="a" style="left:1439px;top:620px;width:114px;height:35px;background:#409eff;border-radius:3px"></div>
<div class="t" style="left:1458.5px;top:627px;font-size:15px;line-height:20px;color:#fff;font-weight:bold">保存并继续</div>
<div class="a" style="left:1566px;top:620px;width:69px;height:35px;background:#409eff;border-radius:3px"></div>
<div class="t" style="left:1585.5px;top:627px;font-size:15px;line-height:20px;color:#fff;font-weight:bold">保存</div>
<svg style="left:41px;top:848.5px;" width="18" height="17" viewBox="0 0 18 17"><path d="M3.5 6.5 Q3.5 1 9 1 Q14.5 1 15.5 5.5" fill="none" stroke="#7a7a7a" stroke-width="1.4"/><path d="M9 1 V4" stroke="#7a7a7a" stroke-width="1.2"/><path d="M4.5 5 V11.5 Q4.5 15 8 16 M0.5 5.5 L4.5 8 M0.5 16 L4.5 12.5 M15.5 5.5 L17 3.8 M15.5 5.5 L13.5 4.8" fill="none" stroke="#7a7a7a" stroke-width="1.3"/><path d="M10.3 10.3 H17.6 M10.3 13.2 H17.6 M10.3 16.2 H17.6" stroke="#6a6a6a" stroke-width="2"/></svg>
<div class="t" style="left:67px;top:847.7px;font-size:15px;line-height:20px;color:#000;">调试信息</div>
<svg style="left:154px;top:850.5px;" width="17" height="14" viewBox="0 0 17 14"><path d="M0.3 1.2 H2.3 M0.3 6.6 H2.3 M0.3 11.8 H2.3 M4.5 1.2 H17 M4.5 6.6 H17 M4.5 11.8 H17" stroke="#666" stroke-width="2.4"/></svg>
<div class="t" style="left:182px;top:847.7px;font-size:15px;line-height:20px;color:#000;">问题</div>
<div class="t" style="left:25px;top:878px;font-size:15px;line-height:20px;color:#000;">查看资源「表单生命周起事件」详情</div>
<div class="t" style="left:1898px;top:46.0px;font-size:15px;line-height:20px;color:#000;">数</div>
<div class="t" style="left:1898px;top:65.5px;font-size:15px;line-height:20px;color:#000;">据</div>
<div class="t" style="left:1898px;top:85.0px;font-size:15px;line-height:20px;color:#000;">源</div>
<div class="t" style="left:1898px;top:144.0px;font-size:15px;line-height:20px;color:#000;">离</div>
<div class="t" style="left:1898px;top:163.7px;font-size:15px;line-height:20px;color:#000;">线</div>
<div class="t" style="left:1898px;top:183.4px;font-size:15px;line-height:20px;color:#000;">资</div>
<div class="t" style="left:1898px;top:203.1px;font-size:15px;line-height:20px;color:#000;">源</div>
</body></html>
